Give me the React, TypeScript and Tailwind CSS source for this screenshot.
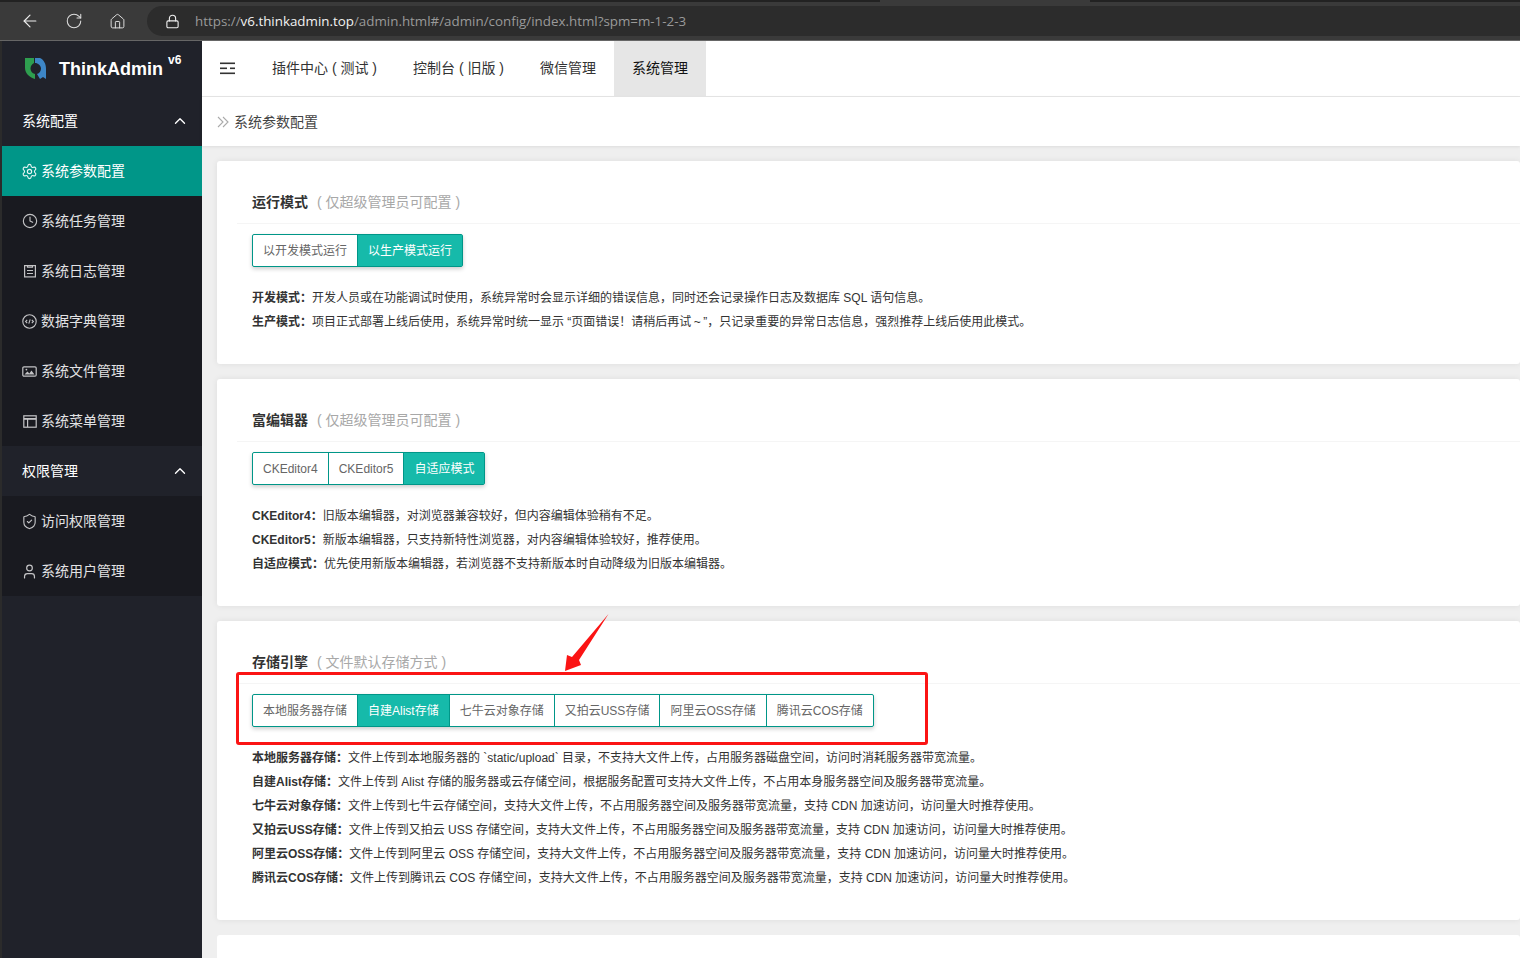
import React from "react";
import { ChevronUp, Settings, Clock, ShieldCheck, User, ArrowLeft, RotateCw, Home, Lock } from "lucide-react";

const sans = "font-['Liberation_Sans','Noto_Sans_CJK_SC',sans-serif]";

function Item({ icon, label, active }: { icon: React.ReactNode; label: string; active?: boolean }) {
  return (
    <div className={`h-[50px] flex items-center pl-[20px] gap-[4px] text-[14px] ${active ? "bg-[#009688] text-white" : "text-[#e2e2e4]"}`}>
      <span className={`w-[15px] flex justify-center ${active ? "text-[#e6f4f3]" : "text-[#c4c4c6]"}`}>{icon}</span>
      <span>{label}</span>
    </div>
  );
}

function Group({ label }: { label: string }) {
  return (
    <div className="h-[50px] flex items-center justify-between pl-[20px] pr-[13px] text-[14px] text-white bg-[#20222a]">
      <span>{label}</span>
      <ChevronUp size={18} strokeWidth={1.8} />
    </div>
  );
}

function Btns({ items, active }: { items: string[]; active: number }) {
  return (
    <div className="inline-flex h-[33px] border border-[#009688] rounded-[2px] shadow-[0_2px_4px_rgba(0,0,0,0.2)] text-[12px] bg-white">
      {items.map((t, i) => (
        <div
          key={t}
          className={`px-[10px] flex items-center ${i > 0 ? "border-l border-[#009688]" : ""} ${i === active ? "bg-[#16baaa] text-white" : "text-[#666]"}`}
        >
          {t}
        </div>
      ))}
    </div>
  );
}

function Card({ title, sub, items, active, lines, h }: { title: string; sub: string; items: string[]; active: number; lines: [string, string][]; h: string }) {
  return (
    <div className={`bg-white rounded-[3px] pt-[31px] mb-[15px] shadow-[0_0_6px_rgba(0,0,0,0.08)] shrink-0 ${h}`}>
      <div className="ml-[20px] pl-[15px] border-b border-[#f5f5f5] h-[32px] flex items-start text-[14px] leading-[20px]">
        <b className="text-[#333] font-bold">{title}</b>
        <span className="text-[#a8a8a8] ml-[9px]">( {sub} )</span>
      </div>
      <div className="pl-[35px] pt-[10px]">
        <Btns items={items} active={active} />
        <div className="mt-[19px] text-[12px] leading-[24px] text-[#333]">
          {lines.map(([a, b]) => (
            <div key={a} className="whitespace-nowrap">
              <b className="font-bold">{a}：</b>
              {b}
            </div>
          ))}
        </div>
      </div>
    </div>
  );
}

export default function App() {
  return (
    <div className={`relative w-[1520px] h-[958px] overflow-hidden flex flex-col bg-[#2b2b2b] ${sans}`}>
      {/* browser chrome */}
      <div className="h-[41px] shrink-0 bg-[#3a3a3a] flex flex-col text-white">
        <div className="h-[2px] flex shrink-0">
          <div className="w-[880px] bg-[#222]" />
          <div className="w-[210px] bg-[#3a3a3a]" />
          <div className="flex-1 bg-[#222]" />
        </div>
        <div className="h-[34px] pt-[4px] flex shrink-0">
          <div className="w-[147px] h-[30px] flex items-center pl-[20px] shrink-0">
            <ArrowLeft size={20} strokeWidth={1.4} className="text-[#eee]" />
            <RotateCw size={18} strokeWidth={1.4} className="ml-[25px] text-[#ddd]" />
            <Home size={17} strokeWidth={1.4} className="ml-[26px] text-[#ddd]" />
          </div>
          <div className="flex-1 h-[30px] rounded-l-full bg-[#2c2c2c] flex items-center pl-[18px] font-['Open_Sans',sans-serif] text-[13.36px] text-[#9a9a9a]">
            <Lock size={15} strokeWidth={1.8} className="text-[#eee]" />
            <span className="ml-[15px]">
              https://<span className="text-[#f2f2f2]">v6.thinkadmin.top</span>/admin.html#/admin/config/index.html?spm=m-1-2-3
            </span>
          </div>
        </div>
        <div className="flex-1" />
        <div className="h-[1px] bg-[#666] shrink-0" />
      </div>

      <div className="flex-1 flex min-h-0 pl-[2px]">
        {/* sidebar */}
        <aside className="w-[200px] shrink-0 bg-[#20222a] flex flex-col">
          <div className="h-[55px] flex items-center pl-[23px]">
            <svg width="21" height="21" viewBox="0 0 21 21" className="shrink-0">
              <path d="M0 0 H9 V5 C7 6 5.5 8 5.5 10.5 C5.5 13 7 15.5 10 16 V21 C4 19 0 15 0 10 Z" fill="#2e9e4f" />
              <path d="M10 0 H15 C19 2 21 6 21 11 V21 L18 19 L15 21 L12 16 C14.5 15.5 16 13 16 10.5 C16 7.5 13 5 10 5 Z" fill="#3d86c6" />
            </svg>
            <span className="ml-[13px] mt-[2px] text-[18px] font-bold text-white">ThinkAdmin</span>
            <sup className="ml-[5px] text-[12px] font-bold text-white -mt-[6px]">v6</sup>
          </div>
          <Group label="系统配置" />
          <Item active label="系统参数配置" icon={<Settings size={17} strokeWidth={1.6} className="shrink-0" />} />
          <div className="bg-[#191a20]">
            <Item label="系统任务管理" icon={<Clock size={16} strokeWidth={1.7} className="shrink-0" />} />
            <Item
              label="系统日志管理"
              icon={
                <svg width="14" height="14" viewBox="0 0 14 14" fill="none" stroke="currentColor" strokeWidth="1.2">
                  <rect x="1.6" y="1.6" width="10.8" height="11.3" />
                  <path d="M4.5 1 V3.2 H9.5 V1 M4 6.5 H10 M4 9.5 H10" />
                </svg>
              }
            />
            <Item
              label="数据字典管理"
              icon={
                <svg width="15" height="15" viewBox="0 0 15 15" fill="none" stroke="currentColor" strokeWidth="1.1">
                  <circle cx="7.5" cy="7.5" r="6.7" />
                  <path d="M5.2 5.8 L3.6 7.5 L5.2 9.2 M9.8 5.8 L11.4 7.5 L9.8 9.2 M8.2 5.4 L6.8 9.6" />
                </svg>
              }
            />
            <Item
              label="系统文件管理"
              icon={
                <svg width="15" height="11" viewBox="0 0 15 11" fill="none" stroke="currentColor" strokeWidth="1.2">
                  <rect x="0.8" y="0.8" width="13.4" height="9.4" rx="1.2" />
                  <path d="M2.5 8.6 L5.4 5.4 L7.4 7.4 L9.4 4.4 L12.5 8.6 Z" fill="currentColor" stroke="none" />
                  <circle cx="4.4" cy="3.6" r="0.9" fill="currentColor" stroke="none" />
                </svg>
              }
            />
            <Item
              label="系统菜单管理"
              icon={
                <svg width="14" height="13" viewBox="0 0 14 13" fill="none" stroke="currentColor" strokeWidth="1.2">
                  <rect x="0.8" y="0.8" width="12.4" height="11.4" />
                  <path d="M0.8 3.9 H13.2" strokeWidth="1.8" />
                  <path d="M4.6 4 V12" />
                </svg>
              }
            />
          </div>
          <Group label="权限管理" />
          <div className="bg-[#191a20]">
            <Item label="访问权限管理" icon={<ShieldCheck size={17} strokeWidth={1.6} className="shrink-0" />} />
            <Item label="系统用户管理" icon={<User size={17} strokeWidth={1.7} className="shrink-0" />} />
          </div>
        </aside>

        {/* main */}
        <main className="flex-1 min-w-0 flex flex-col bg-[#efefef]">
          <header className="h-[56px] shrink-0 bg-white border-b border-[#e6e6e6] flex items-stretch text-[14px] text-[#333] pl-[18px]">
            <div className="flex items-center w-[16px] mr-[36px]">
              <svg width="15" height="13" viewBox="0 0 15 13" fill="#333">
                <rect x="0" y="0.5" width="15" height="1.6" />
                <rect x="0" y="5.5" width="7" height="1.6" />
                <rect x="10" y="5.5" width="5" height="1.6" />
                <rect x="0" y="10.5" width="15" height="1.6" />
              </svg>
            </div>
            <div className="flex items-center w-[141px]">插件中心 ( 测试 )</div>
            <div className="flex items-center w-[127px]">控制台 ( 旧版 )</div>
            <div className="flex items-center w-[74px]">微信管理</div>
            <div className="flex items-center px-[18px] bg-[#e6e6e6] text-[#111]">系统管理</div>
          </header>
          <div className="h-[49px] shrink-0 bg-white flex items-center pl-[15px] text-[14px] text-[#444] shadow-[0_1px_3px_rgba(0,0,0,0.08)]">
            <svg width="12" height="12" viewBox="0 0 12 12" fill="none" stroke="#aaa" strokeWidth="1.1">
              <path d="M1 1 L6 6 L1 11 M6 1 L11 6 L6 11" />
            </svg>
            <span className="ml-[5px] mt-[1px]">系统参数配置</span>
          </div>
          <div className="flex-1 min-h-0 overflow-hidden pt-[15px] pl-[15px] flex flex-col">
            <Card
              h="h-[203px]"
              title="运行模式"
              sub="仅超级管理员可配置"
              items={["以开发模式运行", "以生产模式运行"]}
              active={1}
              lines={[
                ["开发模式", "开发人员或在功能调试时使用，系统异常时会显示详细的错误信息，同时还会记录操作日志及数据库 SQL 语句信息。"],
                ["生产模式", "项目正式部署上线后使用，系统异常时统一显示 “页面错误！请稍后再试\u2009~\u2009”，只记录重要的异常日志信息，强烈推荐上线后使用此模式。"],
              ]}
            />
            <Card
              h="h-[227px]"
              title="富编辑器"
              sub="仅超级管理员可配置"
              items={["CKEditor4", "CKEditor5", "自适应模式"]}
              active={2}
              lines={[
                ["CKEditor4", "旧版本编辑器，对浏览器兼容较好，但内容编辑体验稍有不足。"],
                ["CKEditor5", "新版本编辑器，只支持新特性浏览器，对内容编辑体验较好，推荐使用。"],
                ["自适应模式", "优先使用新版本编辑器，若浏览器不支持新版本时自动降级为旧版本编辑器。"],
              ]}
            />
            <Card
              h="h-[299px]"
              title="存储引擎"
              sub="文件默认存储方式"
              items={["本地服务器存储", "自建Alist存储", "七牛云对象存储", "又拍云USS存储", "阿里云OSS存储", "腾讯云COS存储"]}
              active={1}
              lines={[
                ["本地服务器存储", "文件上传到本地服务器的 `static/upload` 目录，不支持大文件上传，占用服务器磁盘空间，访问时消耗服务器带宽流量。"],
                ["自建Alist存储", "文件上传到 Alist 存储的服务器或云存储空间，根据服务配置可支持大文件上传，不占用本身服务器空间及服务器带宽流量。"],
                ["七牛云对象存储", "文件上传到七牛云存储空间，支持大文件上传，不占用服务器空间及服务器带宽流量，支持 CDN 加速访问，访问量大时推荐使用。"],
                ["又拍云USS存储", "文件上传到又拍云 USS 存储空间，支持大文件上传，不占用服务器空间及服务器带宽流量，支持 CDN 加速访问，访问量大时推荐使用。"],
                ["阿里云OSS存储", "文件上传到阿里云 OSS 存储空间，支持大文件上传，不占用服务器空间及服务器带宽流量，支持 CDN 加速访问，访问量大时推荐使用。"],
                ["腾讯云COS存储", "文件上传到腾讯云 COS 存储空间，支持大文件上传，不占用服务器空间及服务器带宽流量，支持 CDN 加速访问，访问量大时推荐使用。"],
              ]}
            />
            <div className="h-[40px] bg-white rounded-[3px] shrink-0" />
          </div>
        </main>
      </div>

      {/* annotations */}
      <div className="absolute left-[236px] top-[672px] w-[692px] h-[73px] border-[3px] border-[#fb1414] rounded-[3px]" />
      <svg className="absolute left-[560px] top-[610px]" width="54" height="66" viewBox="0 0 54 66">
        <path d="M48.5 4 L19 50 L21 55 L5 61 L7 45 L12 47 Z" fill="#fb1414" />
      </svg>
    </div>
  );
}
